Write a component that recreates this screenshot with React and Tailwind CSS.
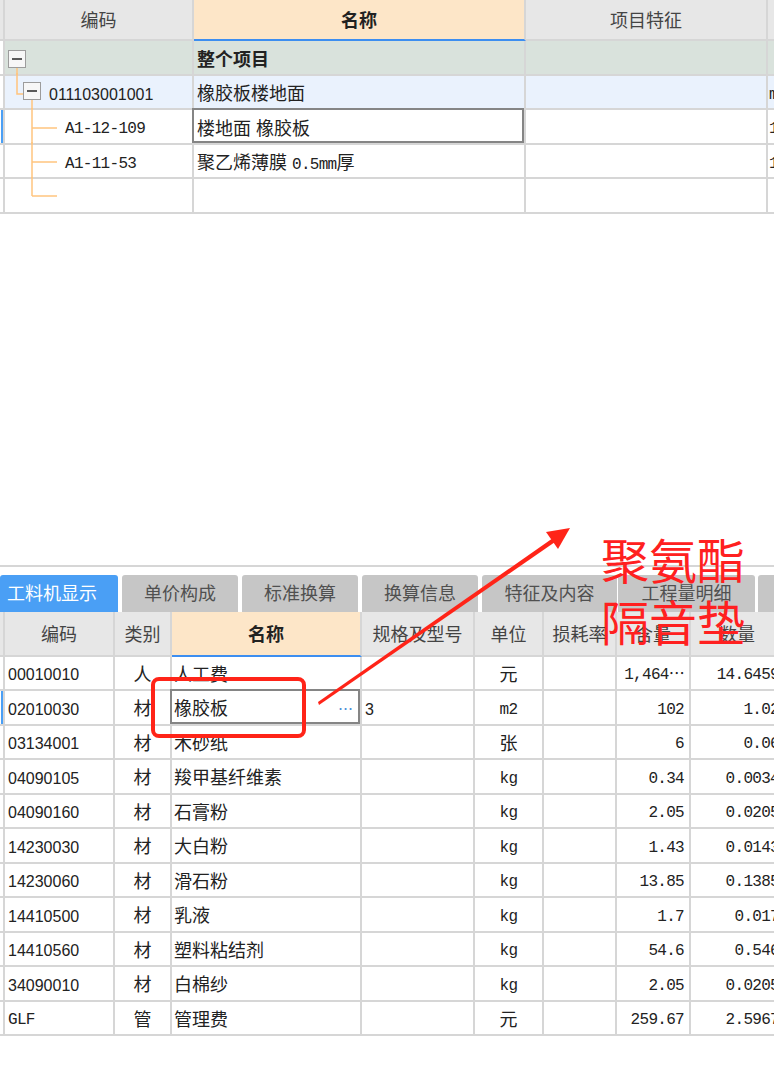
import React from 'react'

const SANS = "font-['Liberation_Sans','Noto_Sans_CJK_SC',sans-serif]"
const MONO = "font-['Liberation_Mono','Noto_Sans_CJK_SC',monospace]"
const CJK = "font-['Noto_Sans_CJK_SC',sans-serif]"
const LINE = 'border-r-2 border-b-2 border-[#d6d6d6]'
const NUM = `${MONO} text-[16px] tracking-[-0.7px]`
const ORANGE = '#ffc47e'

// tree connector pieces for the code column of the top table
const MinusBox = ({ x, y }) => (
  <g>
    <rect x={x + 0.5} y={y + 0.5} width="17" height="17" fill="#f7f7f7" stroke="#9c9c9c" />
    <line x1={x + 4} y1={y + 9} x2={x + 14} y2={y + 9} stroke="#333" strokeWidth="1.6" />
  </g>
)

const TreeRoot = () => (
  <svg width="26" height="33" className="shrink-0 overflow-visible">
    <line x1="12" y1="27" x2="12" y2="34" stroke={ORANGE} strokeWidth="1.5" />
    <MinusBox x={3} y={9} />
  </svg>
)

const TreeGroup = () => (
  <svg width="44" height="33" className="shrink-0 overflow-visible">
    <polyline points="12,-2 12,19 18,19" fill="none" stroke={ORANGE} strokeWidth="1.5" />
    <line x1="27" y1="25" x2="27" y2="34" stroke={ORANGE} strokeWidth="1.5" />
    <MinusBox x={18} y={7} />
  </svg>
)

const TreeLeaf = ({ last }) => (
  <svg width="60" height="33" className="shrink-0 overflow-visible">
    <line x1="27" y1="-2" x2="27" y2={last ? 17 : 34} stroke={ORANGE} strokeWidth="1.5" />
    <line x1="27" y1={last ? 17 : 18} x2="52" y2={last ? 17 : 18} stroke={ORANGE} strokeWidth="1.5" />
  </svg>
)

const topRows = [
  { bg: 'bg-[#d9e2dc]', tree: <TreeRoot />, name: '整个项目', bold: true, tail: '' },
  { bg: 'bg-[#eaf2fd]', tree: <TreeGroup />, code: '011103001001', codeFont: `${SANS} text-[16px]`, name: '橡胶板楼地面', tail: 'm2' },
  { bg: 'bg-white', tree: <TreeLeaf />, code: 'A1-12-109', codeFont: NUM, name: '楼地面 橡胶板', selected: true, marker: true, tail: '1' },
  { bg: 'bg-white', tree: <TreeLeaf />, code: 'A1-11-53', codeFont: NUM, name: <>聚乙烯薄膜 <span className={NUM}>0.5mm</span>厚</>, tail: '1' },
  { bg: 'bg-white', tree: <TreeLeaf last />, name: '', tail: '' },
]

function TopTable() {
  return (
    <div className="w-[800px] text-[#222]">
      <div className="flex h-[41px] text-[18px] text-[#444]">
        <div className={`w-[5px] bg-[#e7e7e7] ${LINE}`} />
        <div className={`w-[189px] flex items-center justify-center pt-[4px] bg-[#e7e7e7] ${LINE}`}>编码</div>
        <div className="w-[332px] flex items-center justify-center pt-[4px] bg-[#fde6c8] border-r-2 border-b-2 border-r-[#d6d6d6] border-b-[#3d8ef0] font-bold text-[#222]">名称</div>
        <div className={`w-[242px] flex items-center justify-center pt-[4px] bg-[#e7e7e7] ${LINE}`}>项目特征</div>
        <div className={`w-[32px] bg-[#e7e7e7] ${LINE}`} />
      </div>
      {topRows.map((r, i) => (
        <div key={i} className={`flex h-[34.5px] ${r.bg}`}>
          <div className={`w-[5px] ${LINE} bg-white`}>
            {r.marker && <div className="ml-[1px] h-full w-[2px] bg-[#4a9ff5]" />}
          </div>
          <div className={`w-[189px] flex items-center ${LINE}`}>
            {r.tree}
            {r.code && <span className={`mt-[6px] ${r.codeFont}`}>{r.code}</span>}
          </div>
          <div className={`relative w-[332px] flex items-center pl-[3px] text-[18px] ${r.bold ? 'font-bold' : ''} ${LINE}`}>
            <span className="mt-[6px] whitespace-pre">{r.name}</span>
            {r.selected && <div className="absolute -left-[2px] -top-[2px] right-0 bottom-0 border-2 border-[#858585]" />}
          </div>
          <div className={`w-[242px] ${LINE}`} />
          <div className={`w-[32px] flex items-center pl-[1px] ${LINE}`}>
            <span className={`mt-[6px] ${NUM}`}>{r.tail}</span>
          </div>
        </div>
      ))}
    </div>
  )
}

const tabs = [
  { label: '工料机显示', w: 'w-[118px]', active: true },
  { label: '单价构成', w: 'w-[116px] ml-[4px]' },
  { label: '标准换算', w: 'w-[116px] ml-[4px]' },
  { label: '换算信息', w: 'w-[116px] ml-[4px]' },
  { label: '特征及内容', w: 'w-[135px] ml-[4px]' },
  { label: '工程量明细', w: 'w-[137px] ml-[1px]' },
  { label: '', w: 'w-[60px] ml-[3px]' },
]

function Tabs() {
  return (
    <div className="flex h-[37px] w-[800px] text-[18px]">
      {tabs.map((t, i) => (
        <div
          key={i}
          className={`${t.w} shrink-0 flex items-center pt-[2px] rounded-t-[3px] ${
            t.active ? 'bg-[#4a9ff5] text-white pl-[7px]' : 'bg-[#c6c6c6] text-[#505050] justify-center'
          }`}
        >
          {t.label}
        </div>
      ))}
    </div>
  )
}

const items = [
  ['00010010', '人', '人工费', '', '元', '1,464⋯', '14.6459'],
  ['02010030', '材', '橡胶板', '3', 'm2', '102', '1.02'],
  ['03134001', '材', '木砂纸', '', '张', '6', '0.06'],
  ['04090105', '材', '羧甲基纤维素', '', 'kg', '0.34', '0.0034'],
  ['04090160', '材', '石膏粉', '', 'kg', '2.05', '0.0205'],
  ['14230030', '材', '大白粉', '', 'kg', '1.43', '0.0143'],
  ['14230060', '材', '滑石粉', '', 'kg', '13.85', '0.1385'],
  ['14410500', '材', '乳液', '', 'kg', '1.7', '0.017'],
  ['14410560', '材', '塑料粘结剂', '', 'kg', '54.6', '0.546'],
  ['34090010', '材', '白棉纱', '', 'kg', '2.05', '0.0205'],
  ['GLF', '管', '管理费', '', '元', '259.67', '2.5967'],
]

const isLatin = (s) => /^[\x00-\x7f]+$/.test(s)

function ItemTable() {
  const head = 'flex items-center justify-center pt-[4px] bg-[#e7e7e7]'
  return (
    <div className="w-[800px] text-[#222]">
      <div className="flex h-[45px] text-[18px] text-[#444]">
        <div className={`w-[5px] bg-[#e7e7e7] ${LINE}`} />
        <div className={`w-[110px] ${head} ${LINE}`}>编码</div>
        <div className={`w-[57px] ${head} ${LINE}`}>类别</div>
        <div className="w-[190px] flex items-center justify-center pt-[4px] bg-[#fde6c8] border-r-2 border-b-2 border-r-[#d6d6d6] border-b-[#3d8ef0] font-bold text-[#222]">名称</div>
        <div className={`w-[113px] ${head} ${LINE}`}>规格及型号</div>
        <div className={`w-[69px] ${head} ${LINE}`}>单位</div>
        <div className={`w-[73px] ${head} ${LINE}`}>损耗率</div>
        <div className={`w-[74px] ${head} ${LINE}`}>含量</div>
        <div className={`w-[94px] ${head} ${LINE}`}>数量</div>
      </div>
      {items.map(([code, kind, name, spec, unit, qty, amount], i) => (
        <div key={code} className="flex h-[34.5px] bg-white">
          <div className={`w-[5px] ${LINE}`}>
            {i === 1 && <div className="ml-[1px] h-full w-[2px] bg-[#4a9ff5]" />}
          </div>
          <div className={`w-[110px] flex items-center pl-[3px] pt-[5px] ${code === 'GLF' ? NUM : `${SANS} text-[16px]`} ${LINE}`}>{code}</div>
          <div className={`w-[57px] flex items-center justify-center pt-[5px] text-[18px] ${LINE}`}>{kind}</div>
          <div className={`relative w-[190px] flex items-center pl-[2px] pt-[5px] text-[18px] ${LINE}`}>
            {name}
            {i === 1 && (
              <>
                <span className="ml-auto mr-[7px] text-[15px] leading-none text-[#4a90d9]">⋯</span>
                <div className="absolute -left-[2px] -top-[2px] right-0 bottom-0 border-2 border-[#858585]" />
              </>
            )}
          </div>
          <div className={`w-[113px] flex items-center pl-[3px] pt-[5px] ${SANS} text-[16px] ${LINE}`}>{spec}</div>
          <div className={`w-[69px] flex items-center justify-center pt-[5px] ${isLatin(unit) ? NUM : 'text-[18px]'} ${LINE}`}>{unit}</div>
          <div className={`w-[73px] ${LINE}`} />
          <div className={`w-[74px] flex items-center justify-end pr-[5px] pt-[5px] ${NUM} ${LINE}`}>{qty}</div>
          <div className={`w-[94px] flex items-center justify-end pr-[4px] pt-[5px] ${NUM} ${LINE}`}>{amount}</div>
        </div>
      ))}
    </div>
  )
}

// red markup drawn over the screenshot
function Annotation() {
  return (
    <>
      <svg width="774" height="1077" className="pointer-events-none absolute left-0 top-0">
        <rect x="153" y="679" width="151" height="57" rx="6" fill="none" stroke="#ff2418" strokeWidth="4" />
        <polygon points="318,702 553,538 555,542 319,705" fill="#ff2418" />
        <polygon points="570,528 546,532 558,549" fill="#ff2418" />
      </svg>
      <div className={`pointer-events-none absolute left-[601px] top-[527px] ${CJK} text-[48px] leading-[62px] text-[#ff2020]`}>
        <div>聚氨酯</div>
        <div>隔音垫</div>
      </div>
    </>
  )
}

export default function App() {
  return (
    <div className={`relative h-[1077px] w-[774px] overflow-hidden bg-white ${SANS}`}>
      <TopTable />
      <div className="h-[351.5px]" />
      <div className="h-[2px] w-full bg-[#d6d6d6]" />
      <div className="h-[7.5px]" />
      <Tabs />
      <ItemTable />
      <Annotation />
    </div>
  )
}
